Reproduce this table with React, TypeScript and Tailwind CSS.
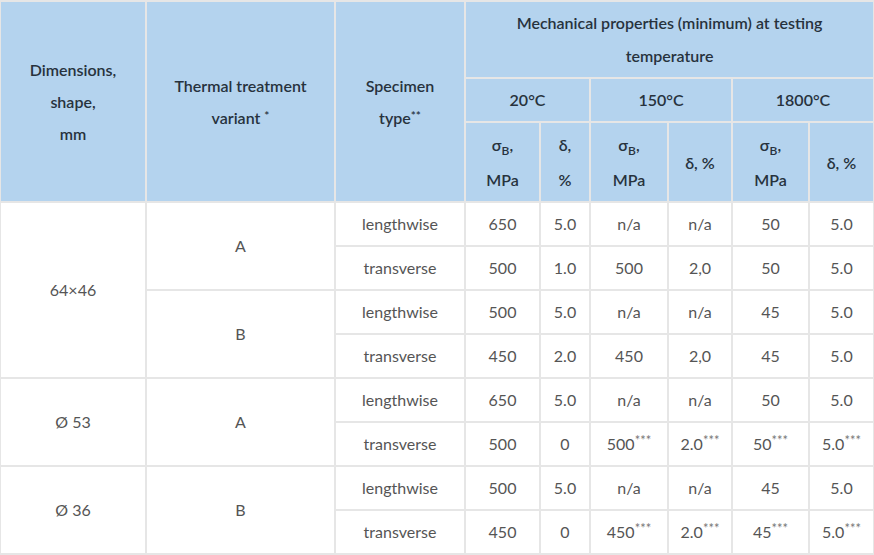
import React from "react";

const th =
  "border-2 border-[#e6e6e6] bg-[#b4d3ee] text-[#27323d] font-semibold text-center align-middle px-2";
const td =
  "border-2 border-[#e6e6e6] bg-white text-[#555555] text-center align-middle px-1";

const Sup = ({ children }: { children: React.ReactNode }) => (
  <span className="text-[13px] text-[#777] relative top-[-5px] leading-none">{children}</span>
);

const HSup = ({ children }: { children: React.ReactNode }) => (
  <span className="text-[12px] relative top-[-4px] leading-none">{children}</span>
);

const SigmaB = () => (
  <>
    σ<span className="text-[12px] relative top-[4px] leading-none">B</span>,
  </>
);

type Row = {
  type: string;
  v: React.ReactNode[];
};

const star = (s: string) => (
  <>
    {s}
    <Sup>***</Sup>
  </>
);

const groups: {
  dim: string;
  variants: { name: string; rows: Row[] }[];
}[] = [
  {
    dim: "64×46",
    variants: [
      {
        name: "A",
        rows: [
          { type: "lengthwise", v: ["650", "5.0", "n/a", "n/a", "50", "5.0"] },
          { type: "transverse", v: ["500", "1.0", "500", "2,0", "50", "5.0"] },
        ],
      },
      {
        name: "B",
        rows: [
          { type: "lengthwise", v: ["500", "5.0", "n/a", "n/a", "45", "5.0"] },
          { type: "transverse", v: ["450", "2.0", "450", "2,0", "45", "5.0"] },
        ],
      },
    ],
  },
  {
    dim: "Ø 53",
    variants: [
      {
        name: "A",
        rows: [
          { type: "lengthwise", v: ["650", "5.0", "n/a", "n/a", "50", "5.0"] },
          {
            type: "transverse",
            v: ["500", "0", star("500"), star("2.0"), star("50"), star("5.0")],
          },
        ],
      },
    ],
  },
  {
    dim: "Ø 36",
    variants: [
      {
        name: "B",
        rows: [
          { type: "lengthwise", v: ["500", "5.0", "n/a", "n/a", "45", "5.0"] },
          {
            type: "transverse",
            v: ["450", "0", star("450"), star("2.0"), star("45"), star("5.0")],
          },
        ],
      },
    ],
  },
];

export default function App() {
  const widths = [146, 189, 130, 75, 50, 78, 64, 77, 65];
  const bodyRows: React.ReactNode[] = [];
  let key = 0;
  groups.forEach((g) => {
    const total = g.variants.reduce((a, v) => a + v.rows.length, 0);
    g.variants.forEach((vr, vi) => {
      vr.rows.forEach((r, ri) => {
        bodyRows.push(
          <tr key={key++} className="h-[44px]">
            {vi === 0 && ri === 0 && (
              <td rowSpan={total} className={td}>
                {g.dim}
              </td>
            )}
            {ri === 0 && (
              <td rowSpan={vr.rows.length} className={td}>
                {vr.name}
              </td>
            )}
            <td className={td}>{r.type}</td>
            {r.v.map((c, i) => (
              <td key={i} className={`${td} whitespace-nowrap`}>
                {c}
              </td>
            ))}
          </tr>
        );
      });
    });
  });

  return (
    <div className="w-[874px] h-[555px] bg-white overflow-hidden" style={{ fontFamily: "Lato, 'Noto Sans', sans-serif" }}>
      <table className="table-fixed border-collapse w-[875px] text-[16px] ml-[-1px]">
        <colgroup>
          {widths.map((w, i) => (
            <col key={i} style={{ width: w }} />
          ))}
        </colgroup>
        <thead>
          <tr className="h-[77px]">
            <th rowSpan={3} className={`${th} leading-[32px]`}>
              Dimensions,
              <br />
              shape,
              <br />
              mm
            </th>
            <th rowSpan={3} className={`${th} leading-[32px]`}>
              Thermal treatment
              <br />
              variant <HSup>*</HSup>
            </th>
            <th rowSpan={3} className={`${th} leading-[32px]`}>
              Specimen
              <br />
              type<HSup>**</HSup>
            </th>
            <th colSpan={6} className={`${th} leading-[33px] pb-[2px]`}>
              Mechanical properties (minimum) at testing
              <br />
              temperature
            </th>
          </tr>
          <tr className="h-[44px]">
            <th colSpan={2} className={th}>
              20°C
            </th>
            <th colSpan={2} className={th}>
              150°C
            </th>
            <th colSpan={2} className={th}>
              1800°C
            </th>
          </tr>
          <tr className="h-[80px]">
            <th className={`${th} leading-[35px]`}>
              <SigmaB />
              <br />
              MPa
            </th>
            <th className={`${th} leading-[35px]`}>
              δ,
              <br />%
            </th>
            <th className={`${th} leading-[35px]`}>
              <SigmaB />
              <br />
              MPa
            </th>
            <th className={`${th} leading-[35px]`}>δ, %</th>
            <th className={`${th} leading-[35px]`}>
              <SigmaB />
              <br />
              MPa
            </th>
            <th className={`${th} leading-[35px]`}>δ, %</th>
          </tr>
        </thead>
        <tbody>{bodyRows}</tbody>
      </table>
    </div>
  );
}
